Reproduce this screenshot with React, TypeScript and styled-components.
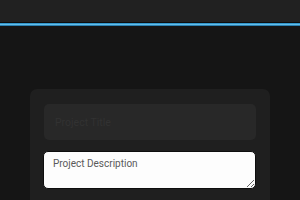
import styled, { createGlobalStyle } from "styled-components";

const GlobalStyle = createGlobalStyle`
  html, body {
    margin: 0;
    padding: 0;
    background: #151515;
    font-family: Roboto, "Liberation Sans", sans-serif;
  }
`;

export default function App() {
  return (
    <>
      <GlobalStyle />
      <S.Page>
        <S.Header />
        <S.Main>
          <S.Card>
            <S.TitleInput placeholder="Project Title" />
            <S.Description placeholder="Project Description" />
          </S.Card>
        </S.Main>
      </S.Page>
    </>
  );
}

const S = {
  Page: styled.div`
    display: flex;
    flex-direction: column;
    width: 300px;
    height: 200px;
    overflow: hidden;
    background: #151515;
  `,

  Header: styled.header`
    height: 22px;
    background: #212121;
    border-bottom: 1px solid #0d0d0d;
    box-shadow: 0 1px 0 #3396cc, 0 2px 0 #62bde8, 0 3px 0 #2a7fb0;
    margin-bottom: 3px;
    flex-shrink: 0;
  `,

  Main: styled.main`
    display: flex;
    justify-content: center;
    padding-top: 63px;
  `,

  Card: styled.section`
    display: flex;
    flex-direction: column;
    gap: 11px;
    width: 240px;
    height: 140px;
    box-sizing: border-box;
    padding: 15px 14px 0 13px;
    background: #1f1f1f;
    border-radius: 7px;
  `,

  TitleInput: styled.input`
    height: 36px;
    box-sizing: border-box;
    margin-left: 1px;
    padding: 0 11px;
    border: none;
    border-radius: 5px;
    background: #282828;
    color: #ddd;
    font-family: Roboto, "Liberation Sans", sans-serif;
    font-size: 10.5px;
    outline: none;

    &::placeholder {
      color: #323232;
    }
  `,

  Description: styled.textarea`
    height: 38px;
    box-sizing: border-box;
    padding: 6px 9px;
    border: 1px solid #0e0e0e;
    border-radius: 5px;
    background: #fdfdfd;
    color: #333;
    font-family: Roboto, "Liberation Sans", sans-serif;
    font-size: 10px;
    outline: none;
    resize: vertical;

    &::placeholder {
      color: #5a5a5a;
    }
  `,
};
